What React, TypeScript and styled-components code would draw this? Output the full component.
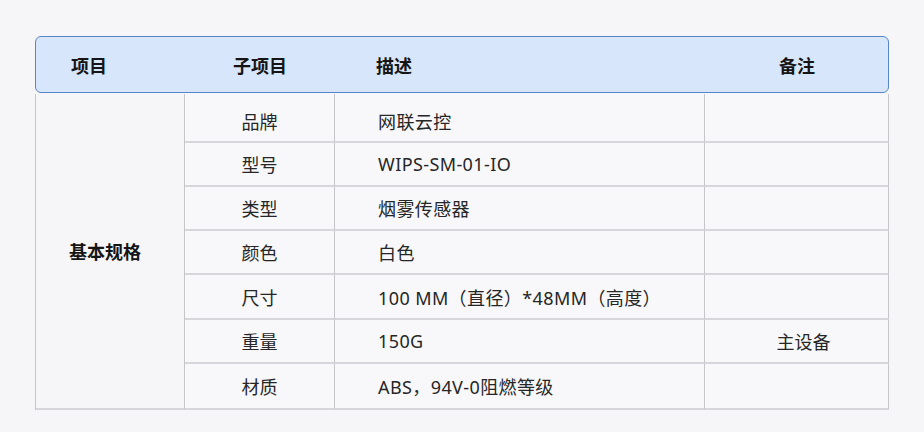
import React from "react";
import styled, { createGlobalStyle } from "styled-components";

const GlobalStyle = createGlobalStyle`
  html, body {
    margin: 0;
    padding: 0;
    background: #f6f6f9;
  }
  body {
    font-family: "Noto Sans", "Noto Sans CJK SC", sans-serif;
    color: #262626;
  }
`;

const COLUMNS = "149px 150px 370px 184px";

const Page = styled.div`
  width: 924px;
  height: 432px;
  box-sizing: border-box;
  padding: 36px 0 0 35px;
`;

const Sheet = styled.div`
  width: 854px;
`;

const HeaderRow = styled.div`
  display: grid;
  grid-template-columns: ${COLUMNS};
  height: 57px;
  box-sizing: border-box;
  background: #d8e6fb;
  border: 1.5px solid #5a85c5;
  border-radius: 6px;
  align-items: center;
`;

const HeadCell = styled.div<{ $align?: "left" | "center"; $pad?: number }>`
  font-size: 18px;
  font-weight: 700;
  color: #151515;
  text-align: ${(p) => p.$align || "center"};
  padding-left: ${(p) => p.$pad || 0}px;
  font-family: "Noto Sans CJK SC", sans-serif;
`;

const Body = styled.div`
  display: grid;
  grid-template-columns: ${COLUMNS};
  grid-template-rows: 49px 44px 44px 44px 45px 44px 46px;
  border-left: 1px solid #c6c6c9;
  margin-top: 1px;
`;

const GroupCell = styled.div`
  grid-row: 1 / span 7;
  display: flex;
  align-items: center;
  justify-content: center;
  padding-right: 10px;
  border-right: 1px solid #c6c6c9;
  border-bottom: 2px solid #d6d6db;
  font-family: "Noto Sans CJK SC", sans-serif;
  font-size: 18px;
  font-weight: 700;
  color: #151515;
`;

const Cell = styled.div<{ $align?: "left" | "center"; $top?: number; $pad?: number; $spread?: boolean }>`
  display: flex;
  align-items: center;
  justify-content: ${(p) => (p.$align === "left" ? "flex-start" : "center")};
  padding-left: ${(p) => p.$pad || 0}px;
  padding-top: ${(p) => p.$top || 0}px;
  border-right: 1px solid #c6c6c9;
  border-bottom: 2px solid #d6d6db;
  background: #f8f8fb;
  font-size: 18px;
  letter-spacing: ${(p) => (p.$spread ? "0.4px" : "0")};
  color: #262626;
  white-space: nowrap;
`;

const rows = [
  { name: "品牌", desc: "网联云控", note: "" },
  { name: "型号", desc: "WIPS-SM-01-IO", note: "" },
  { name: "类型", desc: "烟雾传感器", note: "" },
  { name: "颜色", desc: "白色", note: "" },
  { name: "尺寸", desc: "100 MM（直径）*48MM（高度）", note: "" },
  { name: "重量", desc: "150G", note: "主设备" },
  { name: "材质", desc: "ABS，94V-0阻燃等级", note: "" },
];

export default function App() {
  return (
    <Page>
      <GlobalStyle />
      <Sheet>
        <HeaderRow>
          <HeadCell $align="left" $pad={35}>项目</HeadCell>
          <HeadCell>子项目</HeadCell>
          <HeadCell $align="left" $pad={41}>描述</HeadCell>
          <HeadCell>备注</HeadCell>
        </HeaderRow>
        <Body>
          <GroupCell>基本规格</GroupCell>
          {rows.map((r, i) => (
            <React.Fragment key={r.name}>
              <Cell $top={i === 0 ? 6 : 0}>{r.name}</Cell>
              <Cell $align="left" $pad={43} $spread $top={i === 0 ? 6 : 0}>
                {r.desc}
              </Cell>
              <Cell $pad={r.note ? 14 : 0} $top={i === 0 ? 6 : 0}>
                {r.note}
              </Cell>
            </React.Fragment>
          ))}
        </Body>
      </Sheet>
    </Page>
  );
}
